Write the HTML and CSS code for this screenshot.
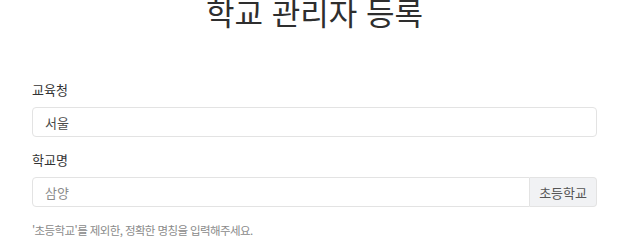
FILE: index.html
```html
<!DOCTYPE html>
<html lang="ko">
<head>
<meta charset="utf-8">
<title>학교 관리자 등록</title>
<link rel="stylesheet" href="styles.css">
</head>
<body>
<main class="page">
  <h1 class="title">학교 관리자 등록</h1>
  <form class="form">
    <div class="field">
      <label class="label" for="office">교육청</label>
      <input class="input" id="office" type="text" value="서울">
    </div>
    <div class="field">
      <label class="label" for="school">학교명</label>
      <div class="group">
        <input class="input group-input" id="school" type="text" placeholder="삼양">
        <span class="addon">초등학교</span>
      </div>
      <p class="help">'초등학교'를 제외한, 정확한 명칭을 입력해주세요.</p>
    </div>
  </form>
</main>
</body>
</html>
```

FILE: styles.css
```css
html, body {
  margin: 0;
  padding: 0;
  background: #ffffff;
}

body {
  font-family: "Noto Sans CJK KR", "Noto Sans", sans-serif;
  color: #333333;
}

.page {
  padding: 0 31px 0 32px;
}

.title {
  margin: -7px 0 0;
  font-size: 31px;
  line-height: 37px;
  font-weight: 400;
  text-align: center;
  color: #2e2e2e;
}

.form {
  margin-top: 51px;
  display: flex;
  flex-direction: column;
  gap: 14px;
}

.field {
  display: flex;
  flex-direction: column;
}

.label {
  font-size: 13px;
  line-height: 18px;
  color: #333333;
  margin-bottom: 8px;
}

.input {
  box-sizing: border-box;
  height: 30px;
  padding: 0 12px;
  border: 1px solid #e3e3e3;
  border-radius: 4px;
  font-family: inherit;
  font-size: 13px;
  color: #4a4a4a;
  background: #ffffff;
  outline: none;
  width: 100%;
}

.input::placeholder {
  color: #8a8a8a;
}

.group {
  display: flex;
}

.group-input {
  flex: 1;
  border-radius: 4px 0 0 4px;
}

.addon {
  box-sizing: border-box;
  height: 30px;
  display: flex;
  align-items: center;
  padding: 0 9px;
  border: 1px solid #e3e3e3;
  border-left: none;
  border-radius: 0 4px 4px 0;
  background: #f1f2f4;
  font-size: 13px;
  color: #555555;
}

.help {
  margin: 15px 0 0;
  font-size: 11.5px;
  line-height: 16px;
  letter-spacing: -0.6px;
  color: #8a8a8a;
}
```
